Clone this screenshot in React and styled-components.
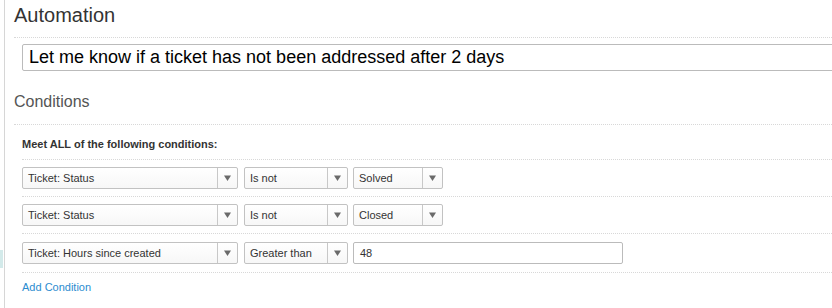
import React from "react";
import styled, { createGlobalStyle } from "styled-components";

const Global = createGlobalStyle`
  html, body { margin: 0; padding: 0; background: #fff; overflow: hidden; }
  body { font-family: "Liberation Sans", Arial, sans-serif; color: #333; }
`;

const Page = styled.div`
  display: flex;
  width: 832px;
  height: 308px;
  overflow: hidden;
`;

const Rail = styled.div`
  flex: 0 0 4px;
  display: flex;
  flex-direction: column;
  border-right: 1px solid #d6d6d6;
`;

const RailTab = styled.div`
  margin-top: 250px;
  height: 18px;
  width: 3px;
  background: #d3eaea;
`;

const Main = styled.div`
  flex: 1;
  padding-left: 9px;
  min-width: 0;
`;

const Title = styled.h1`
  margin: 0;
  padding-top: 4px;
  font-size: 20px;
  line-height: 23px;
  font-weight: normal;
  color: #333;
  height: 33px;
  border-bottom: 1px dotted #d8d8d8;
`;

const NameInput = styled.div`
  margin: 6px 0 0 8px;
  width: 900px;
  height: 25px;
  border: 1px solid #bbb;
  border-radius: 2px;
  padding-left: 6px;
  font-size: 18px;
  line-height: 25px;
  color: #000;
  white-space: nowrap;
  box-sizing: content-box;
`;

const Section = styled.h2`
  margin: 22px 0 0;
  font-size: 16px;
  line-height: 18px;
  font-weight: normal;
  color: #555;
  height: 31px;
  border-bottom: 1px dotted #d8d8d8;
`;

const Block = styled.div`
  padding-left: 8px;
`;

const Meet = styled.div`
  font-size: 11px;
  font-weight: bold;
  color: #333;
  padding-top: 13px;
  height: 21px;
  line-height: 13px;
  border-bottom: 1px dotted #d8d8d8;
`;

const Row = styled.div`
  display: flex;
  align-items: center;
  height: ${(p) => p.$h || 36}px;
  border-bottom: 1px dotted #d8d8d8;
`;

const Select = styled.div`
  display: flex;
  width: ${(p) => p.$w}px;
  height: 22px;
  margin-right: ${(p) => p.$gap || 0}px;
  box-sizing: border-box;
  border: 1px solid #c2c2c2;
  border-radius: 2px;
  background: linear-gradient(#ffffff, #f7f7f7);
  font-size: 11px;
  color: #333;
`;

const SelectText = styled.span`
  flex: 1;
  padding-left: 5px;
  line-height: 20px;
  white-space: nowrap;
  overflow: hidden;
`;

const Arrow = styled.span`
  flex: 0 0 19px;
  border-left: 1px solid #c8c8c8;
  display: flex;
  align-items: center;
  justify-content: center;
`;

const ValueInput = styled.div`
  width: 270px;
  height: 22px;
  box-sizing: border-box;
  border: 1px solid #bbb;
  border-radius: 2px;
  padding-left: 6px;
  font-size: 11px;
  line-height: 20px;
  color: #333;
`;

const AddLink = styled.a`
  display: inline-block;
  margin-top: 8px;
  font-size: 11px;
  line-height: 13px;
  color: #2b8ccf;
  text-decoration: none;
`;

const Caret = () => (
  <svg width="7" height="6" viewBox="0 0 7 6">
    <path d="M0 0.5 H7 L3.5 6 Z" fill="#6a6a6a" />
  </svg>
);

const Dropdown = ({ w, gap, children }) => (
  <Select $w={w} $gap={gap}>
    <SelectText>{children}</SelectText>
    <Arrow>
      <Caret />
    </Arrow>
  </Select>
);

export default function App() {
  return (
    <>
      <Global />
      <Page>
        <Rail>
          <RailTab />
        </Rail>
        <Main>
          <Title>Automation</Title>
          <NameInput>Let me know if a ticket has not been addressed after 2 days</NameInput>
          <Section>Conditions</Section>
          <Block>
            <Meet>Meet ALL of the following conditions:</Meet>
            <Row $h={36}>
              <Dropdown w={216} gap={6}>Ticket: Status</Dropdown>
              <Dropdown w={104} gap={5}>Is not</Dropdown>
              <Dropdown w={90}>Solved</Dropdown>
            </Row>
            <Row $h={36}>
              <Dropdown w={216} gap={6}>Ticket: Status</Dropdown>
              <Dropdown w={104} gap={5}>Is not</Dropdown>
              <Dropdown w={90}>Closed</Dropdown>
            </Row>
            <Row $h={38}>
              <Dropdown w={216} gap={6}>Ticket: Hours since created</Dropdown>
              <Dropdown w={104} gap={5}>Greater than</Dropdown>
              <ValueInput>48</ValueInput>
            </Row>
            <AddLink href="#">Add Condition</AddLink>
          </Block>
        </Main>
      </Page>
    </>
  );
}
